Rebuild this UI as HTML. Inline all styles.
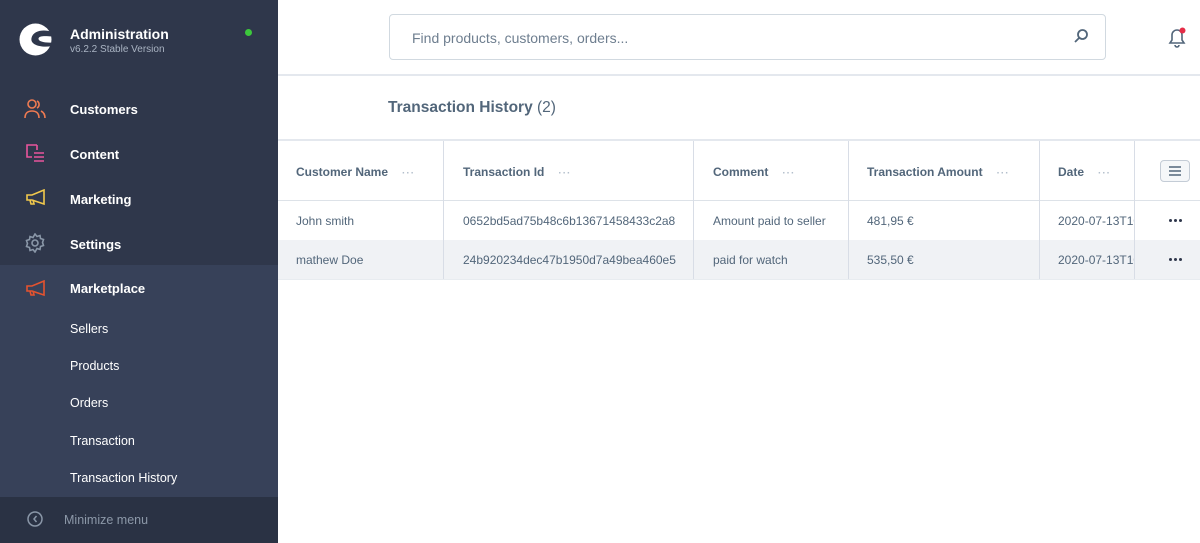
<!DOCTYPE html>
<html><head><style>
*{margin:0;padding:0;box-sizing:border-box}
body{width:1200px;height:543px;overflow:hidden;font-family:"Liberation Sans",sans-serif;background:#fff;position:relative}
.sb{position:absolute;left:0;top:0;width:278px;height:543px;background:#2f374b}
.sb .t{position:absolute;color:#fff;font-size:13px;font-weight:bold}
.mk{position:absolute;left:0;top:265px;width:278px;height:232px;background:#374159}
.mn{position:absolute;left:0;top:497px;width:278px;height:46px;background:#2a3244}
.sub{position:absolute;left:70px;color:#fff;font-size:12.5px}
.ic{position:absolute;left:24px}
.main{position:absolute;left:278px;top:0;right:0;height:543px}
.hl{position:absolute;left:0;right:0;height:2px;background:#e4e8ee}
.vl{position:absolute;width:1px;background:#d8dde6;top:141px;height:138px}
.th{position:absolute;top:165px;font-size:12px;font-weight:bold;color:#52667a}
.dots{color:#b3bfcc;font-weight:bold;letter-spacing:1px;font-size:10px;margin-left:14px}
.td{position:absolute;font-size:12px;color:#52667a}
.rd{position:absolute;left:891px;width:13px;height:4px}
.rd i{position:absolute;top:0;width:3px;height:3px;border-radius:50%;background:#2f374b}
</style></head><body>
<div class="sb">
 <svg style="position:absolute;left:19px;top:23px" width="33" height="33" viewBox="0 0 33 33"><circle cx="16.5" cy="16.5" r="16" fill="#fff"/><path d="M33 9 C26 6 14 7 12.5 15 C11 22 22 25 33 23 L33 19.5 C26 20 19 18.5 19.5 15.5 C20 12.5 27 13 33 13.5 Z" fill="#2f374b"/></svg>
 <div class="t" style="left:70px;top:26px;font-size:14px">Administration</div>
 <div style="position:absolute;left:70px;top:44px;color:#aab4c3;font-size:10px">v6.2.2 Stable Version</div>
 <div style="position:absolute;left:245px;top:29px;width:7px;height:7px;border-radius:50%;background:#3cc83c"></div>
 <svg class="ic" style="top:99px" width="22" height="20" viewBox="0 0 22 20" fill="none" stroke="#f07b52" stroke-width="1.6"><circle cx="8" cy="5" r="4"/><path d="M1 19c0-5 3-7 7-7s7 2 7 7"/><path d="M13 2a4 4 0 0 1 0 7M17 12c2 1 4 3 4 7"/></svg>
 <div class="t" style="left:70px;top:102px">Customers</div>
 <svg class="ic" style="top:144px;left:26px" width="20" height="20" viewBox="0 0 20 20" fill="none" stroke="#e9559d" stroke-width="1.6"><path d="M11 1H1v12h5"/><path d="M11 1v5"/><path d="M8 9h10M8 13h10M8 17h10"/></svg>
 <div class="t" style="left:70px;top:147px">Content</div>
 <svg class="ic" style="top:189px;left:26px" width="20" height="18" viewBox="0 0 20 18" fill="none" stroke="#f2c94c" stroke-width="1.6"><path d="M1 6h5l12-5v14L6 11H1z"/><path d="M4 11l1 4h3l-1-4"/></svg>
 <div class="t" style="left:70px;top:192px">Marketing</div>
 <svg class="ic" style="top:233px;left:25px" width="20" height="20" viewBox="0 0 20 20" fill="none" stroke="#8a97a8" stroke-width="1.6"><circle cx="10" cy="10" r="3"/><path d="M10 1l2 2.5 3-1 .5 3 3 1-1 3 1 3-3 1-.5 3-3-1L10 19l-2-2.5-3 1-.5-3-3-1 1-3-1-3 3-1 .5-3 3 1z"/></svg>
 <div class="t" style="left:70px;top:237px">Settings</div>
 <div class="mk">
  <svg class="ic" style="top:15px;left:26px" width="20" height="18" viewBox="0 0 20 18" fill="none" stroke="#e5532f" stroke-width="1.6"><path d="M1 6h5l12-5v14L6 11H1z"/><path d="M4 11l1 4h3l-1-4"/></svg>
  <div class="t" style="left:70px;top:16px">Marketplace</div>
  <div class="sub" style="top:57px">Sellers</div>
  <div class="sub" style="top:94px">Products</div>
  <div class="sub" style="top:131px">Orders</div>
  <div class="sub" style="top:169px">Transaction</div>
  <div class="sub" style="top:206px">Transaction History</div>
 </div>
 <div class="mn">
  <svg style="position:absolute;left:27px;top:14px" width="16" height="16" viewBox="0 0 16 16" fill="none" stroke="#8a97a8" stroke-width="1.5"><circle cx="8" cy="8" r="7"/><path d="M9.5 5L7 8l2.5 3"/></svg>
  <div style="position:absolute;left:64px;top:16px;color:#8c98a8;font-size:12.5px">Minimize menu</div>
 </div>
</div>
<div class="main">
 <div style="position:absolute;left:111px;top:14px;width:717px;height:46px;border:1px solid #d1d9e0;border-radius:4px"></div>
 <div style="position:absolute;left:134px;top:30px;color:#6e7e8f;font-size:14px">Find products, customers, orders...</div>
 <svg style="position:absolute;left:795px;top:28px" width="16" height="16" viewBox="0 0 16 16" fill="none" stroke="#52667a" stroke-width="1.8"><circle cx="9.5" cy="6.5" r="4.5"/><path d="M6.3 9.7L2 14"/></svg>
 <svg style="position:absolute;left:888px;top:26px" width="22" height="22" viewBox="0 0 22 22" fill="none" stroke="#52667a" stroke-width="1.6"><path d="M4 17h14l-2-3V9a5 5 0 0 0-10 0v5z"/><path d="M9 19a2 2 0 0 0 4 0"/><circle cx="16.5" cy="4.5" r="3" fill="#e52d47" stroke="none"/></svg>
 <div class="hl" style="top:74px"></div>
 <div style="position:absolute;left:110px;top:99px;font-size:15.5px;color:#52667a;font-weight:bold">Transaction History <span style="font-weight:normal">(2)</span></div>
 <div class="hl" style="top:139px"></div>
 <div class="hl" style="top:200px;height:1px;background:#dde2e8"></div>
 <div class="hl" style="top:240px;height:39px;background:#f0f2f5"></div>
 <div class="hl" style="top:279px;height:1px;background:#e8ecf0"></div>
 <div class="vl" style="left:165px"></div><div class="vl" style="left:415px"></div><div class="vl" style="left:570px"></div><div class="vl" style="left:761px"></div><div class="vl" style="left:856px"></div>
 <div class="th" style="left:18px">Customer Name<span class="dots">···</span></div>
 <div class="th" style="left:185px">Transaction Id<span class="dots">···</span></div>
 <div class="th" style="left:435px">Comment<span class="dots">···</span></div>
 <div class="th" style="left:589px">Transaction Amount<span class="dots">···</span></div>
 <div class="th" style="left:780px">Date<span class="dots">···</span></div>
 <div style="position:absolute;left:882px;top:160px;width:30px;height:22px;border:1px solid #c4ccd6;border-radius:4px;background:#f5f7f9"></div>
 <svg style="position:absolute;left:890px;top:166px" width="14" height="10" viewBox="0 0 14 10" stroke="#52667a" stroke-width="1.4"><path d="M1 1h12M1 5h12M1 9h12"/></svg>
 <div class="td" style="left:18px;top:214px">John smith</div>
 <div class="td" style="left:185px;top:214px">0652bd5ad75b48c6b13671458433c2a8</div>
 <div class="td" style="left:435px;top:214px">Amount paid to seller</div>
 <div class="td" style="left:589px;top:214px">481,95 €</div>
 <div class="td" style="left:780px;top:214px;width:76px;overflow:hidden;white-space:nowrap">2020-07-13T10:00</div>
 <div class="rd" style="top:219px"><i style="left:0"></i><i style="left:5px"></i><i style="left:10px"></i></div>
 <div class="td" style="left:18px;top:253px">mathew Doe</div>
 <div class="td" style="left:185px;top:253px">24b920234dec47b1950d7a49bea460e5</div>
 <div class="td" style="left:435px;top:253px">paid for watch</div>
 <div class="td" style="left:589px;top:253px">535,50 €</div>
 <div class="td" style="left:780px;top:253px;width:76px;overflow:hidden;white-space:nowrap">2020-07-13T10:00</div>
 <div class="rd" style="top:258px"><i style="left:0"></i><i style="left:5px"></i><i style="left:10px"></i></div>
</div>
</body></html>
